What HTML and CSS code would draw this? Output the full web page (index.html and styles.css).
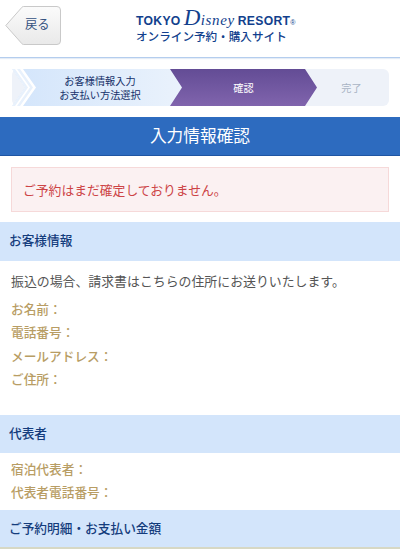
FILE: index.html
```html
<!DOCTYPE html>
<html lang="ja">
<head>
  <meta charset="UTF-8">
  <meta name="viewport" content="width=device-width, initial-scale=1.0">
  <title>入力情報確認</title>
  <link rel="stylesheet" href="styles.css">
</head>
<body>
  <header class="site-header">
    <a class="back-button" href="#">
      <svg class="back-shape" width="56" height="39" viewBox="0 0 56 39">
        <defs>
          <linearGradient id="back-fill" x1="0" y1="0" x2="0" y2="1">
            <stop offset="0" stop-color="#fbfbfb"/>
            <stop offset="1" stop-color="#e9e9e9"/>
          </linearGradient>
        </defs>
        <path d="M0.8 19.5 L17 1.2 Q17.5 0.5 18.5 0.5 L52 0.5 Q55.5 0.5 55.5 4 L55.5 35 Q55.5 38.5 52 38.5 L18.5 38.5 Q17.5 38.5 17 37.8 Z" fill="url(#back-fill)" stroke="#c9c9c9"/>
      </svg>
      <span class="back-label">戻る</span>
    </a>
    <div class="logo">
      <div class="logo-top">
        <span>TOKYO</span>
        <span class="logo-script"><span class="logo-d">D</span>isney</span>
        <span>RESORT</span><span class="logo-mark">®</span>
      </div>
      <div class="logo-sub">オンライン予約・購入サイト</div>
    </div>
  </header>

  <!-- Steps -->
  <div class="steps">
    <div class="step step-first">
      <svg class="step-chevrons" width="24" height="37" viewBox="0 0 24 37">
        <path d="M0 0 L11 0 L24 18.5 L11 37 L0 37 L13 18.5 Z" fill="#fff"/>
        <path d="M0 0 L3 0 L16 18.5 L3 37 L0 37 L13 18.5 Z" fill="#e8f1fc"/>
        <path d="M5 0 L8 0 L21 18.5 L8 37 L5 37 L18 18.5 Z" fill="#e8f1fc"/>
      </svg>
      <span>お客様情報入力<br>お支払い方法選択</span>
    </div>
    <div class="step step-current">確認</div>
    <div class="step step-last">完了</div>
  </div>

  <h1 class="page-title">入力情報確認</h1>

  <div class="alert">ご予約はまだ確定しておりません。</div>

  <section>
    <h2 class="section-title section-title-first">お客様情報</h2>
    <div class="section-body body-customer">
      <p class="note">振込の場合、請求書はこちらの住所にお送りいたします。</p>
      <p class="field">お名前：</p>
      <p class="field">電話番号：</p>
      <p class="field">メールアドレス：</p>
      <p class="field">ご住所：</p>
    </div>
  </section>

  <section>
    <h2 class="section-title">代表者</h2>
    <div class="section-body body-guest">
      <p class="field">宿泊代表者：</p>
      <p class="field">代表者電話番号：</p>
    </div>
  </section>

  <section>
    <h2 class="section-title section-title-last">ご予約明細・お支払い金額</h2>
  </section>
</body>
</html>
```

FILE: styles.css
```css
body {
  margin: 0;
  background-color: #fff;
  font-family: "Noto Sans CJK JP", "Liberation Sans", sans-serif;
  overflow: hidden;
}

h1, h2, p {
  margin: 0;
  font-weight: normal;
}

/* Header */
.site-header {
  display: flex;
  height: 57px;
  border-bottom: 1px solid #b4cdee;
  box-shadow: 0 1px 1px #e4ecf6;
}

.back-button {
  position: relative;
  display: block;
  width: 56px;
  height: 39px;
  margin: 6px 0 0 5px;
  text-decoration: none;
}

.back-shape {
  display: block;
}

.back-label {
  position: absolute;
  top: 9px;
  left: 20px;
  font-size: 12.3px;
  line-height: 19px;
  color: #34527f;
}

.logo {
  width: 180px;
  margin: 8px 0 0 75px;
  color: #123f8d;
  white-space: nowrap;
}

.logo-top {
  display: flex;
  align-items: baseline;
  height: 20px;
  font-family: "Liberation Sans", sans-serif;
  font-size: 12.2px;
  font-weight: bold;
  letter-spacing: 0.3px;
  line-height: 20px;
}

.logo-script {
  margin: 0 3px 0 3px;
  font-family: "Liberation Serif", serif;
  font-size: 15px;
  font-style: italic;
  font-weight: normal;
  letter-spacing: 0.6px;
}

.logo-d {
  font-size: 23px;
}

.logo-mark {
  font-size: 7px;
  font-weight: normal;
}

.logo-sub {
  font-size: 11.6px;
  font-weight: 500;
  line-height: 17px;
}

/* Steps */
.steps {
  display: flex;
  height: 37px;
  margin: 11px 11px 0 12px;
  background-color: #eef2f9;
  border-radius: 6px;
}

.step {
  display: flex;
  align-items: center;
  justify-content: center;
  box-sizing: border-box;
  font-size: 10.2px;
  line-height: 14px;
  text-align: center;
}

.step-first {
  position: relative;
  width: 171px;
  padding-left: 5px;
  color: #16316a;
  background: linear-gradient(90deg, #d3e5fb, #eaf2fc);
  clip-path: polygon(0 0, 159px 0, 171px 50%, 159px 100%, 0 100%, 13px 50%);
}

.step-chevrons {
  position: absolute;
  top: 0;
  left: 0;
}

.step-current {
  width: 147px;
  margin-left: -13px;
  color: #fff;
  background: linear-gradient(180deg, #634c95, #8064ad);
  clip-path: polygon(0 0, 135px 0, 147px 50%, 135px 100%, 0 100%, 12px 50%);
}

.step-last {
  flex: 1;
  padding-right: 3px;
  color: #a9b4c4;
}

/* Title */
.page-title {
  height: 39px;
  margin-top: 11px;
  background-color: #2d6bbf;
  border-bottom: 1px solid #1f55a3;
  box-sizing: border-box;
  color: #fff;
  font-size: 16.7px;
  line-height: 37px;
  text-align: center;
}

/* Alert */
.alert {
  height: 45px;
  margin: 11px 11px 10px;
  padding-left: 11px;
  box-sizing: border-box;
  background-color: #fbf1f2;
  border: 1px solid #f6d9d9;
  color: #cd4446;
  font-size: 12.8px;
  line-height: 43px;
}

/* Sections */
.section-title {
  height: 38px;
  padding-left: 9px;
  background-color: #d3e5fb;
  color: #143c7c;
  font-size: 12.7px;
  font-weight: 500;
  line-height: 36px;
}

.section-title-first {
  height: 39px;
}

.section-title-last {
  height: 37px;
  border-bottom: 2px solid #d7d8c4;
}

.section-body {
  padding: 0 11px;
}

.body-customer {
  height: 154px;
  padding-top: 11px;
  box-sizing: border-box;
}

.body-guest {
  height: 57px;
  padding-top: 4px;
  box-sizing: border-box;
}

.note {
  height: 25px;
  color: #555;
  font-size: 12.9px;
  line-height: 18px;
}

.field {
  height: 23.4px;
  color: #b89d64;
  font-size: 12.7px;
  font-weight: 500;
  line-height: 23.4px;
}
```
